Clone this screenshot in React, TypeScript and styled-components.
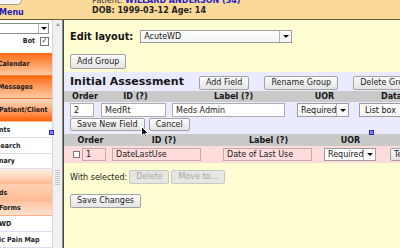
import styled, { createGlobalStyle, css } from 'styled-components'

const GlobalStyle = createGlobalStyle`
  html, body { margin: 0; padding: 0; }
  body {
    font-family: "DejaVu Sans", Verdana, sans-serif;
    font-size: 8px;
    color: #151515;
  }
`

const Page = styled.div`
  position: relative;
  width: 400px;
  height: 248px;
  overflow: hidden;
  display: flex;
  flex-direction: column;
  background: #fffdd2;
`

/* ---------- top bar ---------- */
const Header = styled.header`
  flex: none;
  height: 19px;
  display: flex;
  background: #fbd998;
  border-bottom: 1px solid #6c5a3a;
  overflow: hidden;
`
const MenuBox = styled.div`
  width: 92px;
  display: flex;
  flex-direction: column;
`
const MenuPill = styled.div`
  width: 22px;
  height: 5px;
  box-sizing: border-box;
  background: #f8f8f6;
  border: 1px solid #a99e86;
  border-left: none;
  border-top: none;
  border-radius: 0 0 6px 0;
`
const MenuLink = styled.span`
  margin-top: 3px;
  margin-left: -1px;
  font-weight: bold;
  line-height: 9px;
  color: #1d1db4;
`
const PatientInfo = styled.div`
  display: flex;
  flex-direction: column;
`
const PatientLine = styled.div`
  margin-top: -4px;
  line-height: 10px;
  color: #333;
  white-space: nowrap;
`
const PatientName = styled.b`
  color: #2424c8;
`
const DobLine = styled.div`
  line-height: 10px;
  font-weight: bold;
  color: #222;
`

/* ---------- body ---------- */
const Body = styled.div`
  flex: 1;
  min-height: 0;
  display: flex;
`

const Sidebar = styled.nav`
  width: 52px;
  flex: none;
  display: flex;
  flex-direction: column;
  overflow: hidden;
  background: #fff;
  font-family: "DejaVu Sans Condensed", "DejaVu Sans", sans-serif;
  font-stretch: condensed;
  font-size: 7px;
  font-weight: bold;
`
const SideSelect = styled.div`
  height: 12px;
  margin: 3px 3px 0 0;
  box-sizing: border-box;
  display: flex;
  border: 1px solid #8c8c8c;
  border-left: none;
  background: #fff;
  font-weight: normal;
`
const SideSelectText = styled.span`
  flex: 1;
  display: flex;
  align-items: center;
  margin-left: -3px;
`
const Arrow = styled.span<{ $w?: number }>`
  width: ${p => p.$w ?? 9}px;
  flex: none;
  display: flex;
  align-items: center;
  justify-content: center;
  border-left: 1px solid #b4b4b4;
  &::after {
    content: '';
    border-left: 3px solid transparent;
    border-right: 3px solid transparent;
    border-top: 3px solid #111;
  }
`
const BotRow = styled.div`
  height: 11px;
  margin: 2px 3px 0 0;
  display: flex;
  align-items: center;
  justify-content: flex-end;
  gap: 5px;
  color: #222;
`
const Check = styled.span<{ $size?: number }>`
  width: ${p => p.$size ?? 9}px;
  height: ${p => p.$size ?? 9}px;
  flex: none;
  box-sizing: border-box;
  display: flex;
  align-items: center;
  justify-content: center;
  border: 1px solid #777;
  background: #fff;
  font-size: 8px;
  line-height: 1;
  color: #111;
`
const NavList = styled.div`
  margin-top: 7px;
  display: flex;
  flex-direction: column;
`

type Tone = 'hot' | 'sel' | 'pale' | 'warm' | 'soft' | 'plain'
const tones: Record<Tone, string> = {
  hot: 'linear-gradient(#ff6912 0%, #ff9350 40%, #ffcaa6 100%)',
  sel: 'linear-gradient(#ffdcc6 0%, #ffa670 50%, #ff6008 100%)',
  pale: 'linear-gradient(#fff0e6 0%, #ffd2b6 60%, #ffb890 100%)',
  warm: 'linear-gradient(#ffd0b2 0%, #ffbc94 100%)',
  soft: 'linear-gradient(#ffc3a0 0%, #ffe2d0 100%)',
  plain: '#fff',
}
const NavItem = styled.div<{ $tone: Tone; $h: number }>`
  flex: none;
  height: ${p => p.$h}px;
  box-sizing: border-box;
  display: flex;
  align-items: center;
  white-space: nowrap;
  background: ${p => tones[p.$tone]};
  color: #1a1a1a;
  ${p =>
    p.$tone === 'plain'
      ? css`border-bottom: 1px solid #dcdcf2;`
      : css`border-bottom: 1px solid rgba(255, 140, 80, 0.35);`}
`
const NavText = styled.span<{ $x: number }>`
  margin-left: ${p => p.$x}px;
`

const Scrollbar = styled.div`
  width: 10px;
  flex: none;
  box-sizing: border-box;
  display: flex;
  flex-direction: column;
  align-items: center;
  background: #f0f0f0;
  border-left: 1px solid #d6d6d6;
`
const ScrollUp = styled.div`
  height: 9px;
  display: flex;
  align-items: center;
  &::after {
    content: '';
    border-left: 2px solid transparent;
    border-right: 2px solid transparent;
    border-bottom: 3px solid #9a9a9a;
  }
`
const Grip = styled.div<{ $top: number }>`
  width: 5px;
  height: 16px;
  margin-top: ${p => p.$top}px;
  background: repeating-linear-gradient(#c4c4c4 0 1px, transparent 1px 2px);
`
const Divider = styled.div`
  width: 2px;
  flex: none;
  box-sizing: border-box;
  background: #444;
  border-left: 1px solid #8e8e8e;
`

/* ---------- main form ---------- */
const Main = styled.main`
  flex: 1;
  min-width: 0;
  display: flex;
  flex-direction: column;
  overflow: hidden;
  background: #fffdd2;
`
const LayoutRow = styled.div`
  margin: 10px 0 0 6px;
  height: 13px;
  display: flex;
  align-items: center;
  gap: 7px;
`
const LayoutLabel = styled.b`
  font-size: 9.75px;
  white-space: nowrap;
`
const Select = styled.div<{ $w: number; $h?: number; $bg?: string }>`
  width: ${p => p.$w}px;
  height: ${p => p.$h ?? 14}px;
  flex: none;
  box-sizing: border-box;
  display: flex;
  border: 1px solid #9c9c9c;
  background: ${p => p.$bg ?? 'linear-gradient(#ffffff, #f4f4f4)'};
  white-space: nowrap;
`
const SelectText = styled.span<{ $pad?: number }>`
  flex: 1;
  display: flex;
  align-items: center;
  padding-left: ${p => p.$pad ?? 3}px;
  overflow: hidden;
`
const Btn = styled.button<{ $off?: boolean; $mt?: number; $h?: number }>`
  flex: none;
  align-self: flex-start;
  height: ${p => p.$h ?? 14}px;
  margin-top: ${p => p.$mt ?? 0}px;
  padding: 0 6px;
  box-sizing: border-box;
  font-family: "DejaVu Sans", sans-serif;
  font-size: 8px;
  line-height: 1;
  white-space: nowrap;
  color: #222;
  background: linear-gradient(#fdfdfd, #e3e3e3);
  border: 1px solid #a2a2a2;
  border-radius: 2px;
  ${p =>
    p.$off &&
    css`
      color: #a8a8a8;
      background: #e6e6e2;
      border-color: #c8c8c4;
    `}
`
const PageBtn = styled(Btn)`
  margin-left: 6px;
`
const RowBtn = styled(Btn)`
  align-self: center;
  padding: 0 3px;
`
const Group = styled.section`
  margin-top: 3px;
  background: #ebebff;
`
const GroupHead = styled.div`
  height: 19px;
  padding-left: 6px;
  display: flex;
  align-items: flex-end;
  gap: 15px;
  white-space: nowrap;
`
const GroupTitle = styled.h2`
  margin: 0 0 2px;
  font-size: 11px;
  line-height: 14px;
`
const HeadBtn = styled(Btn)`
  align-self: flex-end;
  margin-bottom: 1px;
`
const HeadRow = styled.div<{ $h: number; $pl?: number }>`
  height: ${p => p.$h}px;
  padding-left: ${p => p.$pl ?? 0}px;
  display: flex;
  align-items: center;
  background: #c9c9c9;
  font-weight: bold;
  white-space: nowrap;
`
const HeadCell = styled.span<{ $w: number; $indent?: number }>`
  width: ${p => p.$w}px;
  flex: none;
  box-sizing: border-box;
  text-align: ${p => (p.$indent != null ? 'left' : 'center')};
  padding-left: ${p => p.$indent ?? 0}px;
`
const FieldRow = styled.div<{ $h: number; $bg?: string }>`
  height: ${p => p.$h}px;
  display: flex;
  align-items: center;
  background: ${p => p.$bg ?? 'transparent'};
  white-space: nowrap;
`
const Input = styled.input<{ $w: number; $ml: number; $h?: number; $pink?: boolean }>`
  width: ${p => p.$w}px;
  height: ${p => p.$h ?? 14}px;
  margin: 0 0 0 ${p => p.$ml}px;
  flex: none;
  box-sizing: border-box;
  padding: 0 0 0 3px;
  font-family: "DejaVu Sans", sans-serif;
  font-size: 8px;
  color: #1a1a1a;
  background: ${p => (p.$pink ? 'transparent' : '#fff')};
  border: 1px solid ${p => (p.$pink ? '#c2aaaa' : '#adadad')};
  outline: none;
`
const Gap = styled.span<{ $w: number }>`
  width: ${p => p.$w}px;
  flex: none;
`
const ButtonRow = styled.div`
  height: 16px;
  padding-left: 6px;
  display: flex;
  align-items: center;
  gap: 4px;
`
const SelectedRow = styled.div`
  margin: 7px 0 0 6px;
  height: 14px;
  display: flex;
  align-items: center;
  gap: 2px;
  white-space: nowrap;
`
const SelectedLabel = styled.span`
  color: #222;
`

/* ---------- overlays ---------- */
const Marker = styled.span<{ $x: number; $y: number }>`
  position: absolute;
  left: ${p => p.$x}px;
  top: ${p => p.$y}px;
  width: 5px;
  height: 5px;
  box-sizing: border-box;
  background: #8080ff;
  border: 1px solid #2a2ae0;
`
const Cursor = styled.svg`
  position: absolute;
  left: 141px;
  top: 126px;
`

const App = () => {
  return (
    <Page>
      <GlobalStyle />
      <Header>
        <MenuBox>
          <MenuPill />
          <MenuLink>Menu</MenuLink>
        </MenuBox>
        <PatientInfo>
          <PatientLine>
            Patient: <PatientName>WILLARD ANDERSON (34)</PatientName>
          </PatientLine>
          <DobLine>DOB: 1999-03-12 Age: 14</DobLine>
        </PatientInfo>
      </Header>

      <Body>
        <Sidebar>
          <SideSelect>
            <SideSelectText>t</SideSelectText>
            <Arrow />
          </SideSelect>
          <BotRow>
            Bot
            <Check>✓</Check>
          </BotRow>
          <NavList>
            <NavItem $tone="hot" $h={23}><NavText $x={-2}>Calendar</NavText></NavItem>
            <NavItem $tone="hot" $h={23}><NavText $x={-2}>Messages</NavText></NavItem>
            <NavItem $tone="sel" $h={23}><NavText $x={-1}>Patient/Client</NavText></NavItem>
            <NavItem $tone="plain" $h={16}><NavText $x={-1}>nts</NavText></NavItem>
            <NavItem $tone="plain" $h={16}><NavText $x={-4}>Search</NavText></NavItem>
            <NavItem $tone="plain" $h={15}><NavText $x={-1}>nary</NavText></NavItem>
            <NavItem $tone="pale" $h={16} />
            <NavItem $tone="warm" $h={16}><NavText $x={-1}>ds</NavText></NavItem>
            <NavItem $tone="soft" $h={15}><NavText $x={-1}>Forms</NavText></NavItem>
            <NavItem $tone="plain" $h={16}><NavText $x={-1}>WD</NavText></NavItem>
            <NavItem $tone="plain" $h={16}><NavText $x={-1}>ic Pain Map</NavText></NavItem>
          </NavList>
        </Sidebar>

        <Scrollbar>
          <ScrollUp />
          <Grip $top={141} />
        </Scrollbar>
        <Divider />

        <Main>
          <LayoutRow>
            <LayoutLabel>Edit layout:</LayoutLabel>
            <Select $w={152} $h={13}>
              <SelectText>AcuteWD</SelectText>
              <Arrow $w={11} />
            </Select>
          </LayoutRow>
          <PageBtn $mt={11} $h={15}>Add Group</PageBtn>

          <Group>
            <GroupHead>
              <GroupTitle>Initial Assessment</GroupTitle>
              <HeadBtn>Add Field</HeadBtn>
              <HeadBtn>Rename Group</HeadBtn>
              <HeadBtn>Delete Group</HeadBtn>
            </GroupHead>
            <HeadRow $h={11} $pl={6}>
              <HeadCell $w={30}>Order</HeadCell>
              <HeadCell $w={71}>ID (?)</HeadCell>
              <HeadCell $w={125}>Label (?)</HeadCell>
              <HeadCell $w={57}>UOR</HeadCell>
              <HeadCell $w={90} $indent={28}>Data Type</HeadCell>
            </HeadRow>
            <FieldRow $h={16}>
              <Input $w={24} $ml={6} readOnly value="2" />
              <Input $w={65} $ml={7} readOnly value="MedRt" />
              <Input $w={113} $ml={6} readOnly value="Meds Admin" />
              <Gap $w={12} />
              <Select $w={52}>
                <SelectText>Required</SelectText>
                <Arrow $w={11} />
              </Select>
              <Gap $w={10} />
              <Select $w={70}>
                <SelectText $pad={5}>List box</SelectText>
              </Select>
            </FieldRow>
            <ButtonRow>
              <Btn $h={13}>Save New Field</Btn>
              <Btn $h={13}>Cancel</Btn>
            </ButtonRow>
          </Group>

          <HeadRow $h={12}>
            <HeadCell $w={53}>Order</HeadCell>
            <HeadCell $w={94}>ID (?)</HeadCell>
            <HeadCell $w={115}>Label (?)</HeadCell>
            <HeadCell $w={49}>UOR</HeadCell>
          </HeadRow>
          <FieldRow $h={17} $bg="#ffdcdc">
            <Gap $w={9} />
            <Check $size={7} />
            <Input $w={24} $ml={2} $h={13} $pink readOnly value="1" />
            <Input $w={89} $ml={6} $h={13} $pink readOnly value="DateLastUse" />
            <Input $w={89} $ml={22} $h={13} $pink readOnly value="Date of Last Use" />
            <Gap $w={12} />
            <Select $w={52} $h={13} $bg="#fff">
              <SelectText>Required</SelectText>
              <Arrow $w={11} />
            </Select>
            <Gap $w={14} />
            <RowBtn $h={13}>Text field</RowBtn>
          </FieldRow>

          <SelectedRow>
            <SelectedLabel>With selected:</SelectedLabel>
            <Btn $off>Delete</Btn>
            <Btn $off>Move to...</Btn>
          </SelectedRow>
          <PageBtn $mt={10}>Save Changes</PageBtn>
        </Main>
      </Body>

      <Marker $x={49} $y={130} />
      <Marker $x={369} $y={130} />
      <Cursor width="8" height="13" viewBox="0 0 8 13">
        <path d="M0.5 0.5 L0.5 10 L2.8 7.8 L4.4 11.6 L5.8 11 L4.3 7.3 L7.3 7.3 Z" fill="#000" stroke="#fff" strokeWidth="1" />
      </Cursor>
    </Page>
  )
}

export default App
